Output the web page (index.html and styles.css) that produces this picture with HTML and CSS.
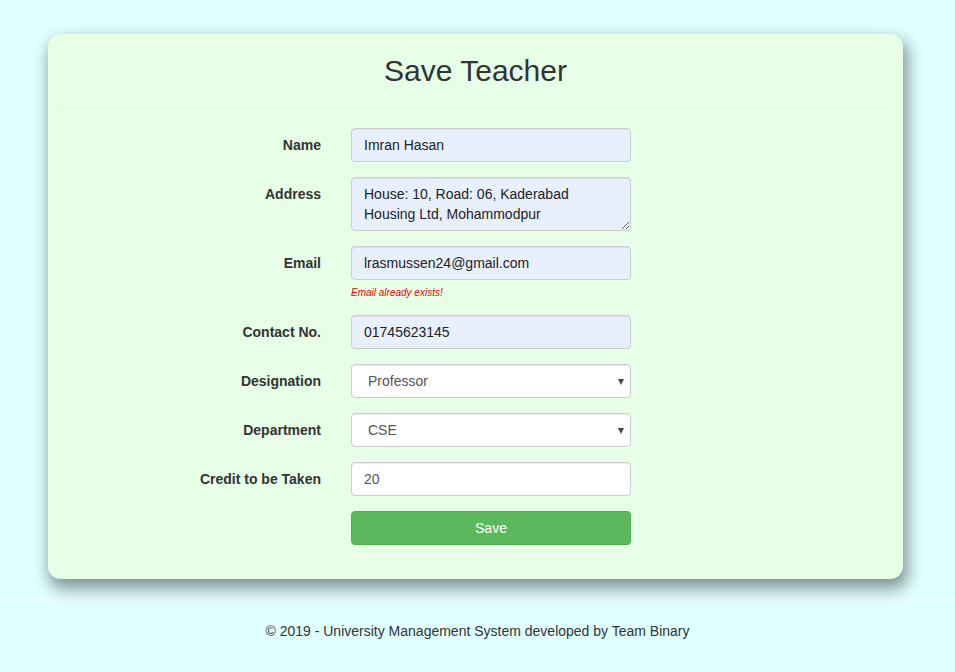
FILE: index.html
```html
<!DOCTYPE html>
<html lang="en">
<head>
<meta charset="utf-8">
<title>Save Teacher</title>
<link rel="stylesheet" href="styles.css">
</head>
<body>
<div class="page">
  <div class="card">
    <h2 class="title">Save Teacher</h2>
    <hr class="rule">
    <form class="form">
      <div class="row">
        <label class="lbl">Name</label>
        <div class="field"><input class="ctl filled" type="text" value="Imran Hasan"></div>
      </div>
      <div class="row">
        <label class="lbl">Address</label>
        <div class="field"><textarea class="ctl filled area">House: 10, Road: 06, Kaderabad Housing Ltd, Mohammodpur</textarea></div>
      </div>
      <div class="row">
        <label class="lbl">Email</label>
        <div class="field">
          <input class="ctl filled" type="text" value="lrasmussen24@gmail.com">
          <span class="error">Email already exists!</span>
        </div>
      </div>
      <div class="row">
        <label class="lbl">Contact No.</label>
        <div class="field"><input class="ctl filled" type="text" value="01745623145"></div>
      </div>
      <div class="row">
        <label class="lbl">Designation</label>
        <div class="field select-wrap">
          <select class="ctl sel"><option>Professor</option></select>
          <span class="caret"></span>
        </div>
      </div>
      <div class="row">
        <label class="lbl">Department</label>
        <div class="field select-wrap">
          <select class="ctl sel"><option>CSE</option></select>
          <span class="caret"></span>
        </div>
      </div>
      <div class="row">
        <label class="lbl">Credit to be Taken</label>
        <div class="field"><input class="ctl" type="text" value="20"></div>
      </div>
      <div class="row last">
        <span class="lbl"></span>
        <div class="field"><button type="button" class="btn">Save</button></div>
      </div>
    </form>
  </div>
  <hr class="foot-rule">
  <footer class="footer"><p>&copy; 2019 - University Management System developed by Team Binary</p></footer>
</div>
</body>
</html>
```

FILE: styles.css
```css
* { box-sizing: border-box; }

html, body {
  margin: 0;
  padding: 0;
  background: #e0ffff;
}

body {
  font-family: "Liberation Sans", Arial, sans-serif;
  font-size: 14px;
  line-height: 20px;
  color: #333;
}

.page {
  padding-top: 34px;
}

.card {
  width: 855px;
  margin: 0 0 0 48px;
  background: #e6ffe6;
  border-radius: 13px;
  padding: 20px 10px 34px;
  box-shadow: 3px 8px 16px 2px rgba(0, 0, 0, 0.42);
}

.title {
  margin: 0;
  font-size: 30px;
  line-height: 33px;
  font-weight: 500;
  text-align: center;
  color: #333;
}

.rule {
  margin: 20px 0;
  border: 0;
  border-top: 1px solid #e9f2e9;
  height: 0;
}

.form {
  display: flex;
  flex-direction: column;
  gap: 15px;
}

.row {
  display: grid;
  grid-template-columns: 263px 280px;
  column-gap: 30px;
}

.lbl {
  text-align: right;
  font-weight: bold;
  padding-top: 7px;
  line-height: 20px;
  color: #333;
}

.field {
  display: flex;
  flex-direction: column;
}

.ctl {
  display: block;
  width: 280px;
  height: 34px;
  margin: 0;
  padding: 6px 12px;
  font-family: "Liberation Sans", Arial, sans-serif;
  font-size: 14px;
  line-height: 20px;
  color: #555;
  background: #fff;
  border: 1px solid #ccc;
  border-radius: 4px;
  box-shadow: inset 0 1px 1px rgba(0, 0, 0, 0.075);
  outline: none;
}

.ctl.filled {
  background: #e8f0fe;
  color: #222;
}

.area {
  height: 54px;
  resize: vertical;
  overflow: hidden;
}

.error {
  display: block;
  margin-top: 5px;
  font-size: 10px;
  line-height: 15px;
  font-style: italic;
  color: #e00;
}

.select-wrap {
  position: relative;
}

.sel {
  -webkit-appearance: none;
  appearance: none;
  padding-left: 16px;
}

.caret {
  position: absolute;
  right: 7px;
  top: 15px;
  width: 0;
  height: 0;
  border-left: 3px solid transparent;
  border-right: 3px solid transparent;
  border-top: 6px solid #444;
}

.btn {
  display: block;
  width: 280px;
  height: 34px;
  margin: 0;
  padding: 6px 12px;
  font-family: "Liberation Sans", Arial, sans-serif;
  font-size: 14px;
  line-height: 20px;
  color: #fff;
  background: #5cb85c;
  border: 1px solid #4cae4c;
  border-radius: 4px;
}

.foot-rule {
  margin: 21px 0 20px;
  border: 0;
  border-top: 1px solid #eaf5f5;
  height: 0;
}

.footer p {
  margin: 0;
  text-align: center;
  line-height: 20px;
  color: #333;
}
```
